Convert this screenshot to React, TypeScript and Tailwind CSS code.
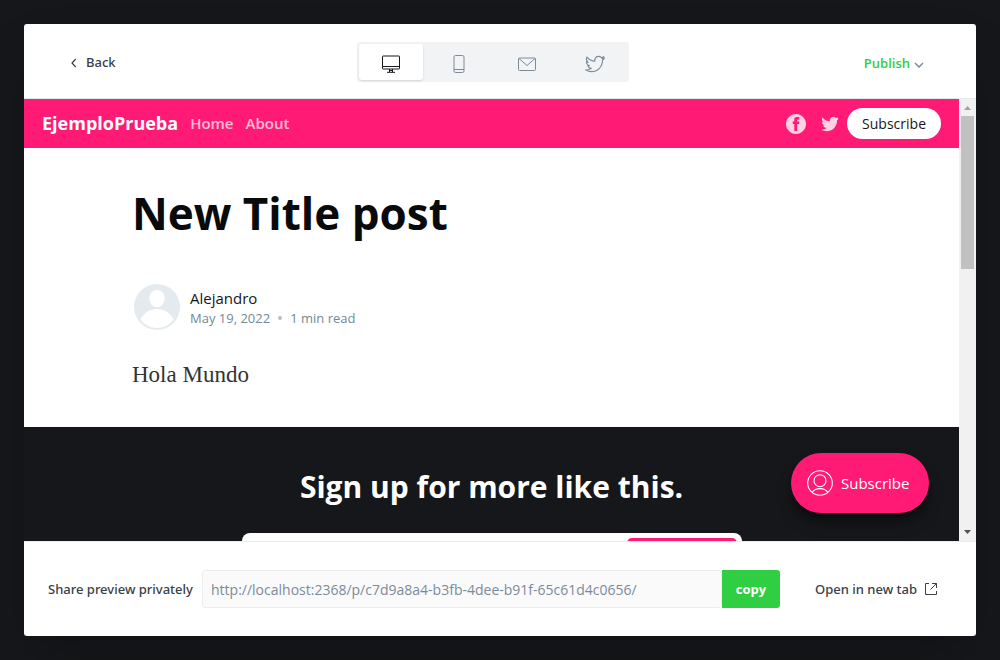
import { useState } from 'react';

const BIRD =
  'M30.063 7.313c-.813 1.125-1.75 2.125-2.875 2.938v.75c0 1.563-.188 3.125-.688 4.625a15.088 15.088 0 0 1-2.063 4.438c-.875 1.438-2 2.688-3.25 3.813a15.015 15.015 0 0 1-4.625 2.563c-1.813.688-3.75 1-5.75 1-3.25 0-6.188-.875-8.875-2.625.438.063.875.125 1.375.125 2.688 0 5.063-.875 7.188-2.5-1.25 0-2.375-.375-3.375-1.125s-1.688-1.688-2.063-2.875c.438.063.813.125 1.125.125.5 0 1-.063 1.5-.25-1.313-.25-2.438-.938-3.313-1.938a5.673 5.673 0 0 1-1.313-3.688v-.063c.813.438 1.688.688 2.625.688a5.228 5.228 0 0 1-1.875-2c-.5-.875-.688-1.813-.688-2.75 0-1.063.25-2.063.75-2.938 1.438 1.75 3.188 3.188 5.25 4.25s4.313 1.688 6.688 1.813a5.579 5.579 0 0 1 1.5-5.438c1.125-1.125 2.5-1.688 4.125-1.688s3.063.625 4.188 1.813a11.48 11.48 0 0 0 3.688-1.375c-.438 1.375-1.313 2.438-2.563 3.188 1.125-.125 2.188-.438 3.313-.875z';

const FACEBOOK =
  'M16 0c8.837 0 16 7.163 16 16s-7.163 16-16 16S0 24.837 0 16 7.163 0 16 0zm5.204 4.911h-3.546c-2.103 0-4.443.885-4.443 3.934.01 1.062 0 2.08 0 3.225h-2.433v3.872h2.509v11.147h4.61v-11.22h3.042l.275-3.81h-3.397s.007-1.695 0-2.187c0-1.205 1.253-1.136 1.329-1.136h2.054V4.911z';

function DesktopIcon() {
  return (
    <svg className="h-5 w-5" viewBox="0 0 20 20" fill="none" stroke="currentColor" aria-hidden="true">
      <rect x="1.5" y="2" width="17" height="13" rx="0.5" />
      <path d="M1.5 12.5h17M8.500 15v3M11.500 15v3M8.500 16.500h3M6 18.300h8" />
    </svg>
  );
}

function PhoneIcon() {
  return (
    <svg className="h-5 w-5" viewBox="0 0 20 20" fill="none" stroke="currentColor" aria-hidden="true">
      <rect x="5" y="1.500" width="10" height="17" rx="1.500" />
      <path d="M5 15.500h10" />
    </svg>
  );
}

function MailIcon() {
  return (
    <svg className="h-5 w-5" viewBox="0 0 20 20" fill="none" stroke="currentColor" aria-hidden="true">
      <rect x="1.5" y="4" width="17" height="12.500" rx="1" />
      <path d="M2 4.500l8 7 8-7" />
    </svg>
  );
}

function BirdOutlineIcon() {
  return (
    <svg className="h-6 w-6" viewBox="-2 -2 36 36" fill="none" stroke="currentColor" strokeWidth="1.7" strokeLinejoin="round" aria-hidden="true">
      <path d={BIRD} />
    </svg>
  );
}

const MODES = [
  { name: 'Desktop', Icon: DesktopIcon },
  { name: 'Mobile', Icon: PhoneIcon },
  { name: 'Email', Icon: MailIcon },
  { name: 'Social', Icon: BirdOutlineIcon },
];

function Toolbar() {
  const [mode, setMode] = useState('Desktop');
  return (
    <header className="grid h-[75px] shrink-0 grid-cols-[1fr_auto_1fr] items-center border-b border-[#e5e9ed] pt-0.5 pr-[52px] pl-[38px]">
      <button type="button" className="flex items-center gap-2 justify-self-start px-2 pt-0.5 font-['Noto_Sans',sans-serif] text-[13px] font-medium text-[#394047]">
        <svg className="h-2.5 w-2" viewBox="0 0 8 10" fill="none" stroke="currentColor" strokeWidth="1.2" aria-hidden="true">
          <path d="M5.7 1L2 5l3.7 4" />
        </svg>
        Back
      </button>
      <div className="flex h-10 w-[272px] gap-1 rounded-[3px] bg-[#f1f3f4] p-0.5">
        {MODES.map(({ name, Icon }) => (
          <button
            key={name}
            type="button"
            aria-label={name}
            aria-pressed={mode === name}
            onClick={() => setMode(name)}
            className={
              mode === name
                ? 'flex flex-1 items-center justify-center rounded-[3px] bg-white pt-1 text-[#15171a] shadow-sm'
                : 'flex flex-1 items-center justify-center rounded-[3px] pt-1 text-[#7c8b9a]'
            }
          >
            <Icon />
          </button>
        ))}
      </div>
      <button type="button" className="flex items-center gap-1 justify-self-end pt-1 text-[13px] font-semibold text-[#30cf43]">
        Publish
        <svg className="mt-0.5 h-1.5 w-2.5 text-[#7c8b9a]" viewBox="0 0 10 6" fill="none" stroke="currentColor" strokeWidth="1.5" aria-hidden="true">
          <path d="M1 1l4 4 4-4" />
        </svg>
      </button>
    </header>
  );
}

function SiteNav() {
  return (
    <nav className="flex h-[49px] items-center bg-[#ff1a75] px-[18px] text-white">
      <a href="#home" className="mr-3 text-[18px] font-bold">EjemploPrueba</a>
      <a href="#home" className="mr-3 text-[15px] font-semibold opacity-70">Home</a>
      <a href="#about" className="text-[15px] font-semibold opacity-70">About</a>
      <div className="ml-auto flex items-center">
        <a href="#facebook" aria-label="Facebook" className="mr-3.5 opacity-80">
          <svg className="h-5 w-5" viewBox="0 0 32 32" fill="currentColor" aria-hidden="true"><path d={FACEBOOK} /></svg>
        </a>
        <a href="#twitter" aria-label="Twitter" className="mr-[7px] opacity-80">
          <svg className="h-5 w-5" viewBox="0 0 32 32" fill="currentColor" aria-hidden="true"><path d={BIRD} /></svg>
        </a>
        <a href="#subscribe" className="flex h-[31px] items-center rounded-full bg-white px-[15px] text-[14px] text-[#15171a]">Subscribe</a>
      </div>
    </nav>
  );
}

function Avatar() {
  return (
    <svg className="h-[46px] w-[46px] shrink-0" viewBox="0 0 46 46" aria-hidden="true">
      <circle cx="23" cy="23" r="23" fill="#e4eaee" />
      <ellipse cx="23" cy="14.5" rx="7.7" ry="8.7" fill="#fff" />
      <path d="M6.5 35.500C9.500 29 16 25 23 25s13.500 4 16.500 10.500C35.500 41 29.500 44 23 44S10.500 41 6.500 35.500z" fill="#fff" />
    </svg>
  );
}

function Article() {
  return (
    <article className="h-[279px] bg-white px-[108px] pt-8">
      <h1 className="text-[44px] leading-[66px] font-bold text-[#090a0b]">New Title post</h1>
      <div className="mt-[38px] flex items-center gap-2.5 pl-0.5">
        <Avatar />
        <div className="pt-0.5">
          <p className="text-[15px] leading-5 text-[#15171a]">Alejandro</p>
          <p className="flex items-center text-[13px] leading-5 text-[#738a94]">
            <time dateTime="2022-05-19">May 19, 2022</time>
            <span className="mx-2 h-1 w-1 rounded-full bg-[#b3bfc6]" />
            1 min read
          </p>
        </div>
      </div>
      <p className="mt-[29px] font-['Liberation_Serif',serif] text-[23px] leading-8 text-[#333]">Hola Mundo</p>
    </article>
  );
}

function SignUp() {
  return (
    <section className="flex min-h-0 flex-1 flex-col items-center overflow-hidden bg-[#15171a]">
      <h2 className="mt-10 shrink-0 text-[30px] leading-10 font-bold text-white">Sign up for more like this.</h2>
      <div className="mt-[26px] flex h-14 w-[500px] shrink-0 justify-end rounded-lg bg-white p-[5px]">
        <div className="w-[110px] rounded-[5px] bg-[#ff1a75]" />
      </div>
    </section>
  );
}

function ScrollBar() {
  return (
    <div className="flex w-[17px] shrink-0 flex-col items-center bg-[#f1f1f1]" aria-hidden="true">
      <svg className="h-[17px] w-[17px]" viewBox="0 0 17 17"><path d="M5 11h7L8.500 7z" fill="#a3a3a3" /></svg>
      <div className="h-[153px] w-[13px] bg-[#c1c1c1]" />
      <svg className="mt-auto h-[17px] w-[17px]" viewBox="0 0 17 17"><path d="M5 6h7L8.500 10z" fill="#505050" /></svg>
    </div>
  );
}

function ShareBar() {
  return (
    <footer className="flex h-[95px] shrink-0 items-center border-t border-[#e9ebec] pr-[39px] pl-6 text-[13px] text-[#394047]">
      <label htmlFor="share-url" className="w-[154px] shrink-0 pt-0.5 font-['Noto_Sans',sans-serif] font-medium">Share preview privately</label>
      <input
        id="share-url"
        readOnly
        value="http://localhost:2368/p/c7d9a8a4-b3fb-4dee-b91f-65c61d4c0656/"
        className="h-[38px] min-w-0 flex-1 rounded-[3px] border border-[#ebeef0] bg-[#fafafa] px-2 text-[14px] text-[#7c8b9a] outline-none"
      />
      <button type="button" className="h-[38px] w-[58px] rounded-r-[3px] bg-[#30cf43] pt-0.5 font-bold text-white">copy</button>
      <a href="#preview" className="ml-[35px] flex items-center gap-2 font-['Noto_Sans',sans-serif] font-medium">
        <span className="pt-0.5">Open in new tab</span>
        <svg className="h-3 w-3" viewBox="0 0 12 12" fill="none" stroke="currentColor" aria-hidden="true">
          <path d="M4 .5H.5v11h11V8M7 .5h4.500V5M11.500 .5l-6 6" />
        </svg>
      </a>
    </footer>
  );
}

export default function App() {
  return (
    <div className="flex h-screen bg-[#15171a] p-6 font-['Open_Sans','Noto_Sans',sans-serif]">
      <main className="flex min-w-0 flex-1 flex-col overflow-hidden rounded-[3px] bg-white shadow-2xl">
        <Toolbar />
        <div className="flex min-h-0 flex-1">
          <div className="relative flex min-w-0 flex-1 flex-col overflow-hidden">
            <SiteNav />
            <Article />
            <SignUp />
            <button type="button" className="absolute right-[30px] bottom-7 flex h-[60px] w-[138px] items-center gap-2 rounded-full bg-[#ff1a75] pl-4 text-[15px] text-white shadow-lg shadow-black/50">
              <svg className="h-[26px] w-[26px]" viewBox="0 0 26 26" fill="none" stroke="currentColor" strokeWidth="1.1" aria-hidden="true">
                <circle cx="13" cy="13" r="12.3" />
                <circle cx="13" cy="10.700" r="6" />
                <path d="M5 22.300c2-2.600 4.800-3.700 8-3.700s6 1.100 8 3.700" />
              </svg>
              Subscribe
            </button>
          </div>
          <ScrollBar />
        </div>
        <ShareBar />
      </main>
    </div>
  );
}
